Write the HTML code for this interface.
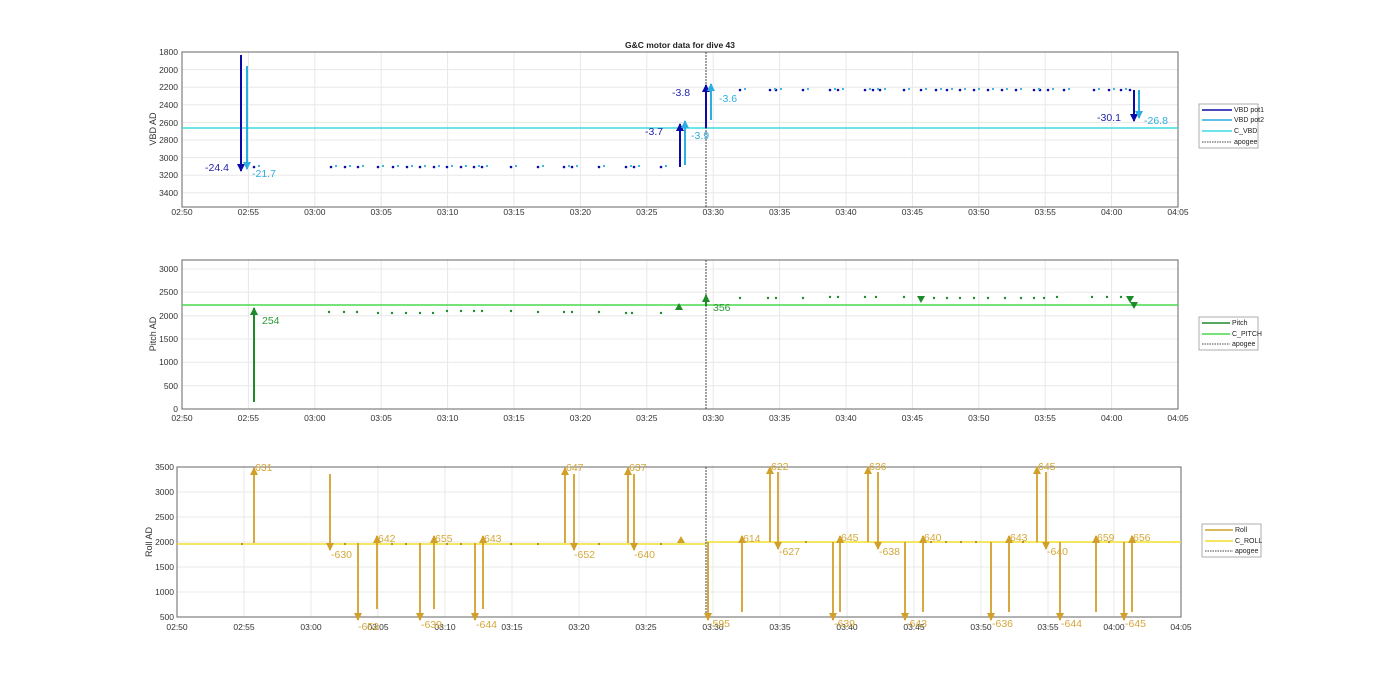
<!DOCTYPE html>
<html><head><meta charset="utf-8"><style>
body{margin:0;background:#fff;}
svg{display:block;font-family:"Liberation Sans",Arial,sans-serif;}
.tk{font-size:8.5px;fill:#333;}
.gr{stroke:#e8e8e8;stroke-width:1;}
.ax{fill:none;stroke:#666;stroke-width:1;}
</style></head><body>
<svg width="1400" height="693" viewBox="0 0 1400 693" xmlns="http://www.w3.org/2000/svg">
<defs>
<marker id="mb" markerWidth="8" markerHeight="8" refX="7" refY="4" orient="auto" markerUnits="userSpaceOnUse"><path d="M0,0 L8,4 L0,8z" fill="#0a0aa8"/></marker>
<marker id="mc" markerWidth="8" markerHeight="8" refX="7" refY="4" orient="auto" markerUnits="userSpaceOnUse"><path d="M0,0 L8,4 L0,8z" fill="#2eaee0"/></marker>
<marker id="mg" markerWidth="8" markerHeight="8" refX="7" refY="4" orient="auto" markerUnits="userSpaceOnUse"><path d="M0,0 L8,4 L0,8z" fill="#1f8a2a"/></marker>
<marker id="mr" markerWidth="8" markerHeight="8" refX="7" refY="4" orient="auto" markerUnits="userSpaceOnUse"><path d="M0,0 L8,4 L0,8z" fill="#d1a02a"/></marker>
</defs>

<!-- ========== PLOT 1 ========== -->
<text x="680" y="48" font-size="8.5" font-weight="bold" text-anchor="middle" fill="#222">G&amp;C motor data for dive 43</text>
<g class="gr">
<line x1="248.4" y1="52" x2="248.4" y2="207"/><line x1="314.8" y1="52" x2="314.8" y2="207"/><line x1="381.2" y1="52" x2="381.2" y2="207"/><line x1="447.6" y1="52" x2="447.6" y2="207"/><line x1="514" y1="52" x2="514" y2="207"/><line x1="580.4" y1="52" x2="580.4" y2="207"/><line x1="646.8" y1="52" x2="646.8" y2="207"/><line x1="713.2" y1="52" x2="713.2" y2="207"/><line x1="779.6" y1="52" x2="779.6" y2="207"/><line x1="846" y1="52" x2="846" y2="207"/><line x1="912.4" y1="52" x2="912.4" y2="207"/><line x1="978.8" y1="52" x2="978.8" y2="207"/><line x1="1045.2" y1="52" x2="1045.2" y2="207"/><line x1="1111.6" y1="52" x2="1111.6" y2="207"/>
<line x1="182" y1="69.6" x2="1178" y2="69.6"/><line x1="182" y1="87.2" x2="1178" y2="87.2"/><line x1="182" y1="104.8" x2="1178" y2="104.8"/><line x1="182" y1="122.4" x2="1178" y2="122.4"/><line x1="182" y1="140" x2="1178" y2="140"/><line x1="182" y1="157.6" x2="1178" y2="157.6"/><line x1="182" y1="175.2" x2="1178" y2="175.2"/><line x1="182" y1="192.8" x2="1178" y2="192.8"/>
</g>
<rect class="ax" x="182" y="52" width="996" height="155"/>
<g class="tk" text-anchor="end">
<text x="178" y="55">1800</text><text x="178" y="73">2000</text><text x="178" y="90">2200</text><text x="178" y="108">2400</text><text x="178" y="126">2600</text><text x="178" y="143">2800</text><text x="178" y="161">3000</text><text x="178" y="178">3200</text><text x="178" y="196">3400</text>
</g>
<g class="tk" text-anchor="middle">
<text x="182" y="215">02:50</text><text x="248.4" y="215">02:55</text><text x="314.8" y="215">03:00</text><text x="381.2" y="215">03:05</text><text x="447.6" y="215">03:10</text><text x="514" y="215">03:15</text><text x="580.4" y="215">03:20</text><text x="646.8" y="215">03:25</text><text x="713.2" y="215">03:30</text><text x="779.6" y="215">03:35</text><text x="846" y="215">03:40</text><text x="912.4" y="215">03:45</text><text x="978.8" y="215">03:50</text><text x="1045.2" y="215">03:55</text><text x="1111.6" y="215">04:00</text><text x="1178" y="215">04:05</text>
</g>
<text transform="translate(156,129) rotate(-90)" font-size="9" text-anchor="middle" fill="#333">VBD AD</text>
<line x1="182" y1="128" x2="1178" y2="128" stroke="#3ddbe0" stroke-width="1.4"/>
<line x1="706" y1="52" x2="706" y2="207" stroke="#444" stroke-width="1" stroke-dasharray="2,1"/>
<g fill="#0a0aa8">
<circle cx="254" cy="167" r="1.3"/><circle cx="331" cy="167" r="1.3"/><circle cx="345" cy="167" r="1.3"/><circle cx="358" cy="167" r="1.3"/><circle cx="378" cy="167" r="1.3"/><circle cx="393" cy="167" r="1.3"/><circle cx="407" cy="167" r="1.3"/><circle cx="420" cy="167" r="1.3"/><circle cx="434" cy="167" r="1.3"/><circle cx="447" cy="167" r="1.3"/><circle cx="461" cy="167" r="1.3"/><circle cx="474" cy="167" r="1.3"/><circle cx="482" cy="167" r="1.3"/><circle cx="511" cy="167" r="1.3"/><circle cx="538" cy="167" r="1.3"/><circle cx="564" cy="167" r="1.3"/><circle cx="572" cy="167" r="1.3"/><circle cx="599" cy="167" r="1.3"/><circle cx="626" cy="167" r="1.3"/><circle cx="634" cy="167" r="1.3"/><circle cx="661" cy="167" r="1.3"/>
<circle cx="740" cy="90" r="1.3"/><circle cx="770" cy="90" r="1.3"/><circle cx="776" cy="90" r="1.3"/><circle cx="803" cy="90" r="1.3"/><circle cx="830" cy="90" r="1.3"/><circle cx="838" cy="90" r="1.3"/><circle cx="865" cy="90" r="1.3"/><circle cx="873" cy="90" r="1.3"/><circle cx="880" cy="90" r="1.3"/><circle cx="904" cy="90" r="1.3"/><circle cx="921" cy="90" r="1.3"/><circle cx="936" cy="90" r="1.3"/><circle cx="947" cy="90" r="1.3"/><circle cx="960" cy="90" r="1.3"/><circle cx="974" cy="90" r="1.3"/><circle cx="988" cy="90" r="1.3"/><circle cx="1002" cy="90" r="1.3"/><circle cx="1016" cy="90" r="1.3"/><circle cx="1034" cy="90" r="1.3"/><circle cx="1040" cy="90" r="1.3"/><circle cx="1048" cy="90" r="1.3"/><circle cx="1064" cy="90" r="1.3"/><circle cx="1094" cy="90" r="1.3"/><circle cx="1109" cy="90" r="1.3"/><circle cx="1121" cy="90" r="1.3"/><circle cx="1130" cy="90" r="1.3"/>
</g>
<g fill="#2eaee0">
<circle cx="259" cy="166" r="1.1"/><circle cx="336" cy="166" r="1.1"/><circle cx="350" cy="166" r="1.1"/><circle cx="363" cy="166" r="1.1"/><circle cx="383" cy="166" r="1.1"/><circle cx="398" cy="166" r="1.1"/><circle cx="412" cy="166" r="1.1"/><circle cx="425" cy="166" r="1.1"/><circle cx="439" cy="166" r="1.1"/><circle cx="452" cy="166" r="1.1"/><circle cx="466" cy="166" r="1.1"/><circle cx="479" cy="166" r="1.1"/><circle cx="487" cy="166" r="1.1"/><circle cx="516" cy="166" r="1.1"/><circle cx="543" cy="166" r="1.1"/><circle cx="569" cy="166" r="1.1"/><circle cx="577" cy="166" r="1.1"/><circle cx="604" cy="166" r="1.1"/><circle cx="631" cy="166" r="1.1"/><circle cx="639" cy="166" r="1.1"/><circle cx="666" cy="166" r="1.1"/>
<circle cx="745" cy="89" r="1.1"/><circle cx="775" cy="89" r="1.1"/><circle cx="781" cy="89" r="1.1"/><circle cx="808" cy="89" r="1.1"/><circle cx="835" cy="89" r="1.1"/><circle cx="843" cy="89" r="1.1"/><circle cx="870" cy="89" r="1.1"/><circle cx="878" cy="89" r="1.1"/><circle cx="885" cy="89" r="1.1"/><circle cx="909" cy="89" r="1.1"/><circle cx="926" cy="89" r="1.1"/><circle cx="941" cy="89" r="1.1"/><circle cx="952" cy="89" r="1.1"/><circle cx="965" cy="89" r="1.1"/><circle cx="979" cy="89" r="1.1"/><circle cx="993" cy="89" r="1.1"/><circle cx="1007" cy="89" r="1.1"/><circle cx="1021" cy="89" r="1.1"/><circle cx="1039" cy="89" r="1.1"/><circle cx="1053" cy="89" r="1.1"/><circle cx="1069" cy="89" r="1.1"/><circle cx="1099" cy="89" r="1.1"/><circle cx="1114" cy="89" r="1.1"/><circle cx="1126" cy="89" r="1.1"/>
</g>
<g stroke-width="2">
<line x1="241" y1="55" x2="241" y2="171" stroke="#0a0aa8" marker-end="url(#mb)"/>
<line x1="247" y1="66" x2="247" y2="169" stroke="#2eaee0" marker-end="url(#mc)"/>
<line x1="680" y1="167" x2="680" y2="124" stroke="#0a0aa8" marker-end="url(#mb)"/>
<line x1="685" y1="165" x2="685" y2="121" stroke="#2eaee0" marker-end="url(#mc)"/>
<line x1="706" y1="128" x2="706" y2="85" stroke="#0a0aa8" marker-end="url(#mb)"/>
<line x1="711" y1="120" x2="711" y2="84" stroke="#2eaee0" marker-end="url(#mc)"/>
<line x1="1134" y1="90" x2="1134" y2="121" stroke="#0a0aa8" marker-end="url(#mb)"/>
<line x1="1139" y1="90" x2="1139" y2="118" stroke="#2eaee0" marker-end="url(#mc)"/>
</g>
<g font-size="10.5">
<text x="205" y="171" fill="#2323a8">-24.4</text><text x="252" y="177" fill="#2eaee0">-21.7</text>
<text x="645" y="135" fill="#2323a8">-3.7</text><text x="691" y="139" fill="#2eaee0">-3.9</text>
<text x="672" y="96" fill="#2323a8">-3.8</text><text x="719" y="102" fill="#2eaee0">-3.6</text>
<text x="1097" y="121" fill="#2323a8">-30.1</text><text x="1144" y="124" fill="#2eaee0">-26.8</text>
</g>
<rect x="1199" y="104" width="59" height="44" fill="#fff" stroke="#999" stroke-width="0.8"/>
<g stroke-width="1.5"><line x1="1202" y1="110" x2="1232" y2="110" stroke="#0a0aa8"/><line x1="1202" y1="120" x2="1232" y2="120" stroke="#2eaee0"/><line x1="1202" y1="131" x2="1232" y2="131" stroke="#3ddbe0"/></g>
<line x1="1202" y1="142" x2="1232" y2="142" stroke="#444" stroke-dasharray="1.5,1"/>
<g font-size="7" fill="#222"><text x="1234" y="112">VBD pot1</text><text x="1234" y="122">VBD pot2</text><text x="1234" y="133">C_VBD</text><text x="1234" y="144">apogee</text></g>

<!-- ========== PLOT 2 ========== -->
<g class="gr">
<line x1="248.4" y1="260" x2="248.4" y2="409"/><line x1="314.8" y1="260" x2="314.8" y2="409"/><line x1="381.2" y1="260" x2="381.2" y2="409"/><line x1="447.6" y1="260" x2="447.6" y2="409"/><line x1="514" y1="260" x2="514" y2="409"/><line x1="580.4" y1="260" x2="580.4" y2="409"/><line x1="646.8" y1="260" x2="646.8" y2="409"/><line x1="713.2" y1="260" x2="713.2" y2="409"/><line x1="779.6" y1="260" x2="779.6" y2="409"/><line x1="846" y1="260" x2="846" y2="409"/><line x1="912.4" y1="260" x2="912.4" y2="409"/><line x1="978.8" y1="260" x2="978.8" y2="409"/><line x1="1045.2" y1="260" x2="1045.2" y2="409"/><line x1="1111.6" y1="260" x2="1111.6" y2="409"/>
<line x1="182" y1="269" x2="1178" y2="269"/><line x1="182" y1="292.3" x2="1178" y2="292.3"/><line x1="182" y1="315.7" x2="1178" y2="315.7"/><line x1="182" y1="339" x2="1178" y2="339"/><line x1="182" y1="362.3" x2="1178" y2="362.3"/><line x1="182" y1="385.7" x2="1178" y2="385.7"/>
</g>
<rect class="ax" x="182" y="260" width="996" height="149"/>
<g class="tk" text-anchor="end">
<text x="178" y="272">3000</text><text x="178" y="295">2500</text><text x="178" y="319">2000</text><text x="178" y="342">1500</text><text x="178" y="365">1000</text><text x="178" y="389">500</text><text x="178" y="412">0</text>
</g>
<g class="tk" text-anchor="middle">
<text x="182" y="421">02:50</text><text x="248.4" y="421">02:55</text><text x="314.8" y="421">03:00</text><text x="381.2" y="421">03:05</text><text x="447.6" y="421">03:10</text><text x="514" y="421">03:15</text><text x="580.4" y="421">03:20</text><text x="646.8" y="421">03:25</text><text x="713.2" y="421">03:30</text><text x="779.6" y="421">03:35</text><text x="846" y="421">03:40</text><text x="912.4" y="421">03:45</text><text x="978.8" y="421">03:50</text><text x="1045.2" y="421">03:55</text><text x="1111.6" y="421">04:00</text><text x="1178" y="421">04:05</text>
</g>
<text transform="translate(156,334) rotate(-90)" font-size="9" text-anchor="middle" fill="#333">Pitch AD</text>
<line x1="182" y1="305" x2="1178" y2="305" stroke="#4ad84a" stroke-width="1.4"/>
<line x1="706" y1="260" x2="706" y2="409" stroke="#444" stroke-width="1" stroke-dasharray="2,1"/>
<g fill="#1f8a2a">
<circle cx="329" cy="312" r="1.2"/><circle cx="344" cy="312" r="1.2"/><circle cx="357" cy="312" r="1.2"/><circle cx="378" cy="313" r="1.2"/><circle cx="392" cy="313" r="1.2"/><circle cx="406" cy="313" r="1.2"/><circle cx="420" cy="313" r="1.2"/><circle cx="433" cy="313" r="1.2"/><circle cx="447" cy="311" r="1.2"/><circle cx="461" cy="311" r="1.2"/><circle cx="474" cy="311" r="1.2"/><circle cx="482" cy="311" r="1.2"/><circle cx="511" cy="311" r="1.2"/><circle cx="538" cy="312" r="1.2"/><circle cx="564" cy="312" r="1.2"/><circle cx="572" cy="312" r="1.2"/><circle cx="599" cy="312" r="1.2"/><circle cx="626" cy="313" r="1.2"/><circle cx="632" cy="313" r="1.2"/><circle cx="661" cy="313" r="1.2"/>
<circle cx="740" cy="298" r="1.2"/><circle cx="768" cy="298" r="1.2"/><circle cx="776" cy="298" r="1.2"/><circle cx="803" cy="298" r="1.2"/><circle cx="830" cy="297" r="1.2"/><circle cx="838" cy="297" r="1.2"/><circle cx="865" cy="297" r="1.2"/><circle cx="876" cy="297" r="1.2"/><circle cx="904" cy="297" r="1.2"/><circle cx="934" cy="298" r="1.2"/><circle cx="947" cy="298" r="1.2"/><circle cx="960" cy="298" r="1.2"/><circle cx="974" cy="298" r="1.2"/><circle cx="988" cy="298" r="1.2"/><circle cx="1005" cy="298" r="1.2"/><circle cx="1021" cy="298" r="1.2"/><circle cx="1034" cy="298" r="1.2"/><circle cx="1044" cy="298" r="1.2"/><circle cx="1057" cy="297" r="1.2"/><circle cx="1092" cy="297" r="1.2"/><circle cx="1107" cy="297" r="1.2"/><circle cx="1121" cy="297" r="1.2"/>
<path d="M675,310 L683,310 L679,303z"/><path d="M917,296 L925,296 L921,303z"/><path d="M1126,296 L1134,296 L1130,303z"/><path d="M1130,302 L1138,302 L1134,309z"/>
</g>
<g stroke-width="2">
<line x1="254" y1="402" x2="254" y2="308" stroke="#1f8a2a" marker-end="url(#mg)"/>
<line x1="706" y1="306" x2="706" y2="295" stroke="#1f8a2a" marker-end="url(#mg)"/>
</g>
<g font-size="10.5" fill="#2e9a36"><text x="262" y="324">254</text><text x="713" y="311">356</text></g>
<rect x="1199" y="317" width="59" height="33" fill="#fff" stroke="#999" stroke-width="0.8"/>
<g stroke-width="1.5"><line x1="1202" y1="323" x2="1230" y2="323" stroke="#1f8a2a"/><line x1="1202" y1="334" x2="1230" y2="334" stroke="#4ad84a"/></g>
<line x1="1202" y1="344" x2="1230" y2="344" stroke="#444" stroke-dasharray="1.5,1"/>
<g font-size="7" fill="#222"><text x="1232" y="325">Pitch</text><text x="1232" y="336">C_PITCH</text><text x="1232" y="346">apogee</text></g>

<!-- ========== PLOT 3 ========== -->
<g class="gr">
<line x1="244" y1="465" x2="244" y2="617"/><line x1="311" y1="465" x2="311" y2="617"/><line x1="378" y1="465" x2="378" y2="617"/><line x1="445" y1="465" x2="445" y2="617"/><line x1="512" y1="465" x2="512" y2="617"/><line x1="579" y1="465" x2="579" y2="617"/><line x1="646" y1="465" x2="646" y2="617"/><line x1="713" y1="465" x2="713" y2="617"/><line x1="780" y1="465" x2="780" y2="617"/><line x1="847" y1="465" x2="847" y2="617"/><line x1="914" y1="465" x2="914" y2="617"/><line x1="981" y1="465" x2="981" y2="617"/><line x1="1048" y1="465" x2="1048" y2="617"/><line x1="1114" y1="465" x2="1114" y2="617"/>
<line x1="177" y1="492" x2="1181" y2="492"/><line x1="177" y1="517" x2="1181" y2="517"/><line x1="177" y1="542" x2="1181" y2="542"/><line x1="177" y1="567" x2="1181" y2="567"/><line x1="177" y1="592" x2="1181" y2="592"/>
</g>
<rect class="ax" x="177" y="467" width="1004" height="150"/>
<g class="tk" text-anchor="end">
<text x="174" y="470">3500</text><text x="174" y="495">3000</text><text x="174" y="520">2500</text><text x="174" y="545">2000</text><text x="174" y="570">1500</text><text x="174" y="595">1000</text><text x="174" y="620">500</text>
</g>
<g class="tk" text-anchor="middle">
<text x="177" y="630">02:50</text><text x="244" y="630">02:55</text><text x="311" y="630">03:00</text><text x="378" y="630">03:05</text><text x="445" y="630">03:10</text><text x="512" y="630">03:15</text><text x="579" y="630">03:20</text><text x="646" y="630">03:25</text><text x="713" y="630">03:30</text><text x="780" y="630">03:35</text><text x="847" y="630">03:40</text><text x="914" y="630">03:45</text><text x="981" y="630">03:50</text><text x="1048" y="630">03:55</text><text x="1114" y="630">04:00</text><text x="1181" y="630">04:05</text>
</g>
<text transform="translate(152,542) rotate(-90)" font-size="9" text-anchor="middle" fill="#333">Roll AD</text>
<line x1="177" y1="544" x2="706" y2="544" stroke="#f2e12c" stroke-width="1.4"/>
<line x1="706" y1="542" x2="1181" y2="542" stroke="#f2e12c" stroke-width="1.4"/>
<line x1="706" y1="467" x2="706" y2="617" stroke="#444" stroke-width="1" stroke-dasharray="2,1"/>
<g fill="#b08a2a">
<circle cx="242" cy="544" r="1.1"/><circle cx="345" cy="544" r="1.1"/><circle cx="392" cy="544" r="1.1"/><circle cx="406" cy="544" r="1.1"/><circle cx="447" cy="544" r="1.1"/><circle cx="461" cy="544" r="1.1"/><circle cx="511" cy="544" r="1.1"/><circle cx="538" cy="544" r="1.1"/><circle cx="599" cy="544" r="1.1"/><circle cx="661" cy="544" r="1.1"/><circle cx="806" cy="542" r="1.1"/><circle cx="931" cy="542" r="1.1"/><circle cx="946" cy="542" r="1.1"/><circle cx="961" cy="542" r="1.1"/><circle cx="976" cy="542" r="1.1"/><circle cx="1023" cy="542" r="1.1"/><circle cx="1109" cy="542" r="1.1"/>
<path d="M677,543 L685,543 L681,536z" fill="#d1a02a"/>
</g>
<g stroke="#d1a02a" stroke-width="1.8" marker-end="url(#mr)">
<line x1="254" y1="543" x2="254" y2="468"/>
<line x1="330" y1="474" x2="330" y2="550"/>
<line x1="358" y1="543" x2="358" y2="620"/>
<line x1="377" y1="609" x2="377" y2="536"/>
<line x1="420" y1="543" x2="420" y2="620"/>
<line x1="434" y1="609" x2="434" y2="536"/>
<line x1="475" y1="543" x2="475" y2="620"/>
<line x1="483" y1="609" x2="483" y2="536"/>
<line x1="565" y1="543" x2="565" y2="468"/>
<line x1="574" y1="474" x2="574" y2="550"/>
<line x1="628" y1="543" x2="628" y2="468"/>
<line x1="634" y1="474" x2="634" y2="550"/>
<line x1="708" y1="542" x2="708" y2="620"/>
<line x1="742" y1="612" x2="742" y2="536"/>
<line x1="770" y1="542" x2="770" y2="467"/>
<line x1="778" y1="472" x2="778" y2="549"/>
<line x1="833" y1="542" x2="833" y2="620"/>
<line x1="840" y1="612" x2="840" y2="536"/>
<line x1="868" y1="542" x2="868" y2="467"/>
<line x1="878" y1="472" x2="878" y2="549"/>
<line x1="905" y1="542" x2="905" y2="620"/>
<line x1="923" y1="612" x2="923" y2="536"/>
<line x1="991" y1="542" x2="991" y2="620"/>
<line x1="1009" y1="612" x2="1009" y2="536"/>
<line x1="1037" y1="542" x2="1037" y2="467"/>
<line x1="1046" y1="472" x2="1046" y2="549"/>
<line x1="1060" y1="542" x2="1060" y2="620"/>
<line x1="1096" y1="612" x2="1096" y2="536"/>
<line x1="1124" y1="542" x2="1124" y2="620"/>
<line x1="1132" y1="612" x2="1132" y2="536"/>
</g>
<g font-size="10.5" fill="#d4a83a">
<text x="255" y="471">631</text><text x="331" y="558">-630</text><text x="358" y="630">-653</text><text x="378" y="542">642</text><text x="421" y="628">-639</text><text x="435" y="542">655</text><text x="476" y="628">-644</text><text x="484" y="542">643</text>
<text x="566" y="471">647</text><text x="574" y="558">-652</text><text x="629" y="471">637</text><text x="634" y="558">-640</text>
<text x="709" y="627">-595</text><text x="743" y="542">614</text><text x="771" y="470">622</text><text x="779" y="555">-627</text>
<text x="834" y="627">-639</text><text x="841" y="541">645</text><text x="869" y="470">636</text><text x="879" y="555">-638</text>
<text x="906" y="627">-643</text><text x="924" y="541">640</text><text x="992" y="627">-636</text><text x="1010" y="541">643</text>
<text x="1038" y="470">645</text><text x="1047" y="555">-640</text><text x="1061" y="627">-644</text><text x="1097" y="541">659</text><text x="1125" y="627">-645</text><text x="1133" y="541">656</text>
</g>
<rect x="1202" y="524" width="59" height="33" fill="#fff" stroke="#999" stroke-width="0.8"/>
<g stroke-width="1.5"><line x1="1205" y1="530" x2="1233" y2="530" stroke="#d1a02a"/><line x1="1205" y1="541" x2="1233" y2="541" stroke="#f2e12c"/></g>
<line x1="1205" y1="551" x2="1233" y2="551" stroke="#444" stroke-dasharray="1.5,1"/>
<g font-size="7" fill="#222"><text x="1235" y="532">Roll</text><text x="1235" y="543">C_ROLL</text><text x="1235" y="553">apogee</text></g>
</svg>
</body></html>
